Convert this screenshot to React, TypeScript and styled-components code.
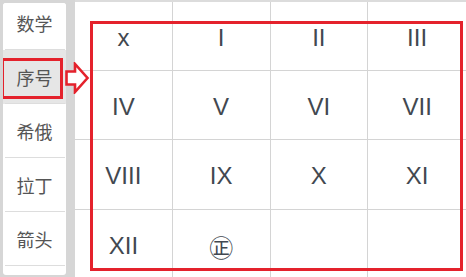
import React from "react";
import styled, { createGlobalStyle } from "styled-components";

const GlobalStyle = createGlobalStyle`
  html, body {
    margin: 0;
    padding: 0;
    background: #ffffff;
  }
`;

const tabs = ["数学", "序号", "希俄", "拉丁", "箭头"];
const selectedTab = 1;

const cells = [
  "x", "I", "II", "III",
  "IV", "V", "VI", "VII",
  "VIII", "IX", "X", "XI",
  "XII", "㊣", "", "",
];

const Frame = styled.div`
  position: relative;
  display: flex;
  width: 466px;
  height: 277px;
  overflow: hidden;
  background: #d6d6d6;
`;

const Sidebar = styled.div`
  width: 75px;
  flex: none;
  padding: 3px 9px 2px 3px;
  box-sizing: border-box;
`;

const TabPanel = styled.div`
  height: 100%;
  background: #ffffff;
  border-radius: 3px;
  overflow: hidden;
`;

const TabList = styled.div`
  margin-top: -7px;
  display: flex;
  flex-direction: column;
`;

const Tab = styled.div<{ $active?: boolean }>`
  position: relative;
  height: 54px;
  display: flex;
  align-items: center;
  justify-content: center;
  font-family: "Noto Sans CJK SC", "Noto Sans", sans-serif;
  font-size: 18px;
  color: #555555;
  background: ${(p) => (p.$active ? "#e6e6e6" : "#ffffff")};

  &::after {
    content: "";
    position: absolute;
    left: 2px;
    right: 1px;
    bottom: 0;
    height: 1px;
    background: #dddddd;
  }
`;

const TabMark = styled.div`
  position: absolute;
  left: -2px;
  top: 8px;
  width: 62px;
  height: 41px;
  border: 3px solid #e4222c;
  box-sizing: border-box;
`;

const Main = styled.div`
  position: relative;
  flex: 1;
  background: #ffffff;
  border-top: 2px solid #dcdcdc;
`;

const Grid = styled.div`
  display: grid;
  grid-template-columns: repeat(4, 1fr);
  grid-template-rows: 69px 69px 70px 70px;
`;

const Cell = styled.div<{ $col: number }>`
  display: flex;
  align-items: center;
  justify-content: center;
  padding-top: 3px;
  border-bottom: 1px solid #d4d4d4;
  border-right: ${(p) => (p.$col < 3 ? "1px solid #d4d4d4" : "none")};
  font-family: "Liberation Sans", "Noto Sans CJK SC", sans-serif;
  font-size: 24px;
  color: #424850;
`;

const Seal = styled.span`
  font-family: "Noto Sans CJK SC", sans-serif;
  font-size: 24px;
`;

const Highlight = styled.div`
  position: absolute;
  left: 15px;
  top: 19px;
  width: 373px;
  height: 250px;
  border: 3px solid #e4222c;
  box-sizing: border-box;
  pointer-events: none;
`;

const Arrow = styled.svg`
  position: absolute;
  left: 65px;
  top: 62px;
`;

export default function App() {
  return (
    <>
      <GlobalStyle />
      <Frame>
        <Sidebar>
          <TabPanel>
            <TabList>
              {tabs.map((t, i) => (
                <Tab key={t} $active={i === selectedTab}>
                  {t}
                  {i === selectedTab && <TabMark />}
                </Tab>
              ))}
            </TabList>
          </TabPanel>
        </Sidebar>
        <Main>
          <Grid>
            {cells.map((c, i) => (
              <Cell key={i} $col={i % 4}>
                {c === "㊣" ? <Seal>{c}</Seal> : c}
              </Cell>
            ))}
          </Grid>
          <Highlight />
        </Main>
        <Arrow width="25" height="32" viewBox="0 0 25 32">
          <polygon
            points="1.5,9.5 10,9.5 10,2 22.5,16 10,30 10,22.5 1.5,22.5"
            fill="#ffffff"
            stroke="#e4222c"
            strokeWidth="2.6"
            strokeLinejoin="miter"
          />
        </Arrow>
      </Frame>
    </>
  );
}
